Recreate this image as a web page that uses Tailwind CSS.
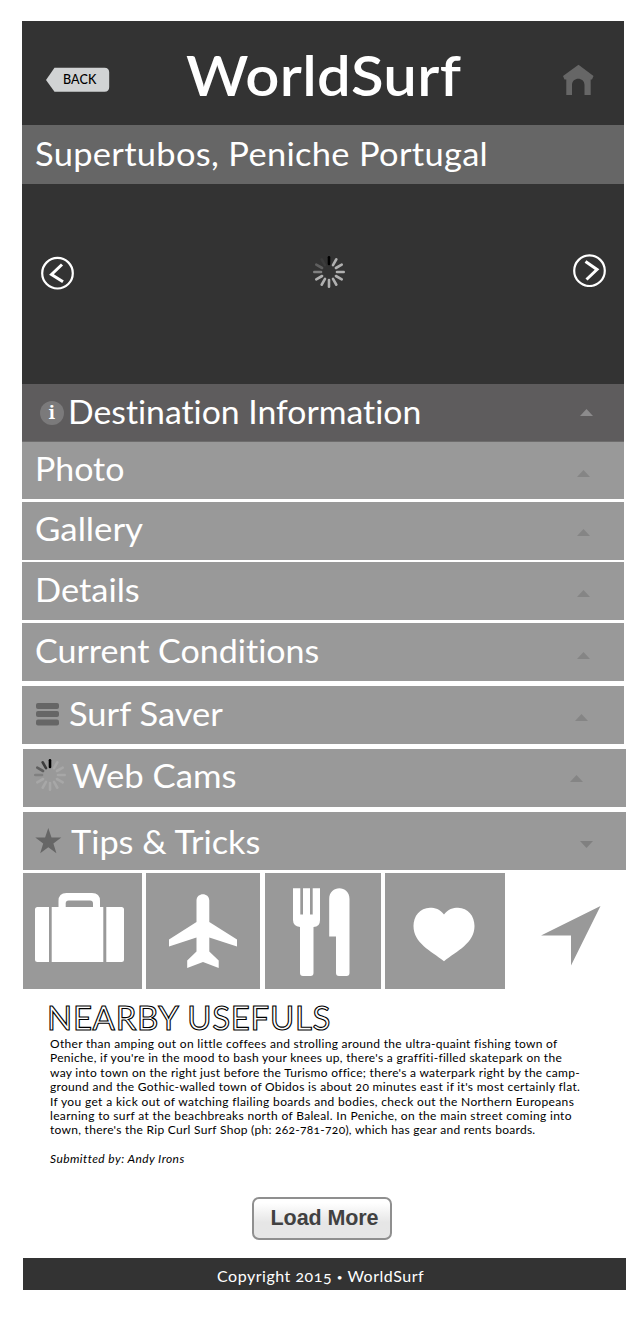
<!DOCTYPE html>
<html lang="en">
<head>
<meta charset="utf-8">
<title>WorldSurf</title>
<script src="https://cdn.jsdelivr.net/npm/@tailwindcss/browser@4"></script>
</head>
<body class="bg-white">
<svg class="hidden">
  <symbol id="up" viewBox="0 0 13 7"><path d="M0 7 6.500 0 13 7Z" fill="currentColor"/></symbol>
  <symbol id="spinner" viewBox="-17 -17 34 34">
    <g stroke-width="2.600" stroke-linecap="round" stroke="currentColor">
      <path d="M0-8V-14.700" transform="rotate(30)"/><path d="M0-8V-14.700" transform="rotate(60)"/><path d="M0-8V-14.700" transform="rotate(90)"/><path d="M0-8V-14.700" transform="rotate(120)"/><path d="M0-8V-14.700" transform="rotate(150)"/><path d="M0-8V-14.700" transform="rotate(180)"/><path d="M0-8V-14.700" transform="rotate(210)"/><path d="M0-8V-14.700" transform="rotate(240)"/>
      <path d="M0-8V-14.700" transform="rotate(270)" stroke="#808080"/><path d="M0-8V-14.700" transform="rotate(300)" stroke="#5f5f5f"/><path d="M0-8V-14.700" transform="rotate(330)" stroke="#3c3c3c"/><path d="M0-8V-14.700" stroke="#000"/>
    </g>
  </symbol>
</svg>
<main class="w-[640px] h-[1330px] overflow-hidden pt-[21px] font-[Lato,sans-serif] text-white">
  <header class="ml-[22px] w-[602px] h-[104px] bg-[#333] flex items-start">
    <div class="relative ml-[24px] mt-[46px] w-[64px] h-[26px] shrink-0">
      <svg class="absolute inset-0" width="64" height="26" viewBox="0 0 64 26"><path d="M0 13 8.500.8H58.500Q63.200.8 63.200 5.500V20Q63.200 24.700 58.500 24.700H8.500Z" fill="#d1d3d4"/></svg>
      <span class="relative block pl-[17px] text-[12.500px] leading-[26px] font-medium tracking-[0.100px] text-black">BACK</span>
    </div>
    <h1 class="ml-[76px] w-[300px] shrink-0 origin-left scale-x-[1.060] text-[56.500px] leading-[106px] font-semibold tracking-[0.300px] whitespace-nowrap">WorldSurf</h1>
    <svg class="ml-[77px] mt-[43px] shrink-0" width="32" height="32" viewBox="0 0 32 32"><path d="M15.500.7 30.500 12 29 15.500H27.700V31H21.500V21C21.500 12.500 9 12.500 9 21V31H3.300V15.500H1.500L0 12Z" fill="#666"/></svg>
  </header>
  <h2 class="ml-[22px] w-[602px] h-[59px] bg-[#666] pl-[13px] text-[32px] leading-[58px] whitespace-nowrap"><span class="inline-block origin-left scale-x-[1.076] tracking-[0.300px]">Supertubos, Peniche Portugal</span></h2>
  <section class="ml-[22px] w-[602px] h-[200px] bg-[#333] flex items-start">
    <svg class="ml-[19px] mt-[72px]" width="34" height="34" viewBox="0 0 34 34" fill="none" stroke="#fff"><circle cx="16.500" cy="17.200" r="15.300" stroke-width="2.200"/><path d="M21 8.500 10.500 18.500 22 25.800" stroke-width="3"/></svg>
    <svg class="ml-[236.500px] mt-[71px] text-[#b0b0b0]" width="34" height="34"><use href="#spinner"/></svg>
    <svg class="ml-[226.500px] mt-[69px]" width="34" height="34" viewBox="0 0 34 34" fill="none" stroke="#fff"><circle cx="17.500" cy="17.700" r="15.300" stroke-width="2.200"/><path d="M13.500 8.500 25 16.500 14.500 26.500" stroke-width="3"/></svg>
  </section>

  <nav class="text-[32px] leading-[54px] whitespace-nowrap [font-variant-ligatures:none]">
    <div class="ml-[22px] w-[602px] h-[58px] bg-[#5e5c5d] flex items-start border-b border-[#6e6d6d]">
      <span class="ml-[18px] mt-[17px] size-[24px] rounded-full bg-[#7b7a7b] text-center font-['Noto_Serif','DejaVu_Serif',serif] text-[18px] leading-[23px] font-bold">i</span>
      <span class="ml-[4px] pt-px origin-left scale-x-[1.055]">Destination Information</span>
      <svg class="ml-auto mr-[31px] mt-[25px] text-[#8c8b8c]" width="13" height="7"><use href="#up"/></svg>
    </div>
    <div class="ml-[22px] w-[602px] h-[57px] bg-[#999] flex items-start pl-[13px]">
      <span class="origin-left scale-x-[1.060]">Photo</span>
      <svg class="ml-auto mr-[34px] mt-[28px] text-[#858585]" width="13" height="7"><use href="#up"/></svg>
    </div>
    <div class="mt-[3px] ml-[22px] w-[602px] h-[58px] bg-[#999] flex items-start pl-[13px]">
      <span class="origin-left scale-x-[1.088]">Gallery</span>
      <svg class="ml-auto mr-[34px] mt-[27px] text-[#858585]" width="13" height="7"><use href="#up"/></svg>
    </div>
    <div class="mt-[2px] ml-[22px] w-[602px] h-[58px] bg-[#999] flex items-start pl-[13px] pt-px">
      <span class="origin-left scale-x-[1.075]">Details</span>
      <svg class="ml-auto mr-[34px] mt-[27px] text-[#858585]" width="13" height="7"><use href="#up"/></svg>
    </div>
    <div class="mt-[3px] ml-[22px] w-[602px] h-[58px] bg-[#999] flex items-start pl-[13px] pt-px">
      <span class="origin-left scale-x-[1.063]">Current Conditions</span>
      <svg class="ml-auto mr-[34px] mt-[28px] text-[#858585]" width="13" height="7"><use href="#up"/></svg>
    </div>
    <div class="mt-[5px] ml-[22px] w-[602px] h-[58px] bg-[#999] flex items-start">
      <svg class="ml-[14px] mt-[17px]" width="23" height="23" fill="#666"><rect width="23" height="6" rx="2"/><rect y="8" width="23" height="6" rx="2"/><rect y="16.500" width="23" height="6" rx="2"/></svg>
      <span class="ml-[10px] origin-left pt-px scale-x-[1.078]">Surf Saver</span>
      <svg class="ml-auto mr-[36px] mt-[28px] text-[#858585]" width="13" height="7"><use href="#up"/></svg>
    </div>
    <div class="mt-[5px] ml-[23px] w-[603px] h-[58px] bg-[#999] flex items-start">
      <svg class="ml-[9.500px] mt-[9px] text-[#a7a7a7]" width="34" height="34"><use href="#spinner"/></svg>
      <span class="ml-[5.500px] origin-left scale-x-[1.083]">Web Cams</span>
      <svg class="ml-auto mr-[43px] mt-[26px] text-[#858585]" width="13" height="7"><use href="#up"/></svg>
    </div>
    <div class="mt-[5px] ml-[23px] w-[603px] h-[58px] bg-[#999] flex items-start">
      <svg class="ml-[12px] mt-[16px]" width="27" height="26" viewBox="0 0 27 26"><path d="M13.300 0 16.500 9.600H26.300L18.400 15.500 21.400 25.200 13.300 19.200 5.200 25.200 8.200 15.500.3 9.600H10.100Z" fill="#666"/></svg>
      <span class="ml-[9px] origin-left pt-[3px] scale-x-[1.072]">Tips &amp; Tricks</span>
      <svg class="ml-auto mr-[33px] mt-[29px] rotate-180 text-[#808080]" width="13" height="7"><use href="#up"/></svg>
    </div>
  </nav>

  <div class="mt-[3px] ml-[23px] flex items-start">
    <svg class="bg-[#999]" width="119" height="116" viewBox="23 873 119 116"><g fill="#fff"><path d="M49 907H37.500Q35 907 35 909.500V959.500Q35 962 37.500 962H49ZM106.300 907H121.500Q124 907 124 909.500V959.500Q124 962 121.500 962H106.300ZM51.700 907H58.500V901Q58.500 893 66.500 893H92Q100 893 100 901V907H103.300V962H51.700Z"/><path d="M65.700 907V903.500Q65.700 900.500 68.700 900.500H90Q93 900.500 93 903.500V907Z" fill="#999"/></g></svg>
    <svg class="ml-[4px] bg-[#999]" width="114" height="116" viewBox="146 873 114 116"><path d="M196.500 900.500C196.500 892 209.300 892 209.300 900.500V922L237 939.500V946.500L209.300 937.500V951.500L218.700 960.500V968L203 962 187.200 968V960.500L196.500 951.500V937.500L169 946.500V939.500L196.500 922Z" fill="#fff"/></svg>
    <svg class="ml-[5px] bg-[#999]" width="116" height="116" viewBox="265 873 116 116"><path d="M293 888.300H300.300V914.500H303V888.300H310V914.500H312.700V888.300H320V920Q320 927 313.500 927V973Q313.500 976 310.500 976H303Q300 976 300 973V927Q293 926 293 920ZM329.200 936.500V899C329.200 884.500 349.500 884.500 349.500 899V973Q349.500 976 346.500 976H339Q336 976 336 973V936.500Z" fill="#fff"/></svg>
    <svg class="ml-[4px] bg-[#999]" width="120" height="116" viewBox="385 873 120 116"><path d="M444 914.500C440 909 435 907.700 430 907.700 420 907.700 413.500 916 413.500 926 413.500 943 431 951 444 961.200 457 951 474.500 943 474.500 926 474.500 916 468 907.700 458 907.700 453 907.700 448 909 444 914.500Z" fill="#fff"/></svg>
    <svg class="ml-[36px] mt-[32px]" width="60" height="62" viewBox="541 905 60 62"><path d="M600.500 906 571 965.500V935.500H541Z" fill="#999"/></svg>
  </div>

  <article class="pl-[50px] text-black">
    <h3 class="-ml-[3px] h-[48px] pt-[8px] text-[33px] leading-[40px] tracking-[0.680px] whitespace-nowrap text-white [-webkit-text-stroke:1.100px_#000]">NEARBY USEFULS</h3>
    <p class="text-[12px] leading-[14.400px] whitespace-nowrap [font-variant-numeric:oldstyle-nums]">
      <span class="block tracking-[0.304px]">Other than amping out on little coffees and strolling around the ultra-quaint fishing town of</span>
      <span class="block tracking-[0.300px]">Peniche, if you're in the mood to bash your knees up, there's a graffiti-filled skatepark on the</span>
      <span class="block tracking-[0.285px]">way into town on the right just before the Turismo office; there's a waterpark right by the camp-</span>
      <span class="block tracking-[0.310px]">ground and the Gothic-walled town of Obidos is about 20 minutes east if it's most certainly flat.</span>
      <span class="block tracking-[0.350px]">If you get a kick out of watching flailing boards and bodies, check out the Northern Europeans</span>
      <span class="block tracking-[0.340px]">learning to surf at the beachbreaks north of Baleal. In Peniche, on the main street coming into</span>
      <span class="block tracking-[0.280px]">town, there's the Rip Curl Surf Shop (ph: 262-781-720), which has gear and rents boards.</span>
    </p>
    <p class="mt-[14.500px] text-[12px] leading-[14.400px] italic tracking-[0.420px]">Submitted by: Andy Irons</p>
  </article>

  <button class="mt-[30.500px] ml-[252px] block w-[140px] h-[43px] rounded-[7px] border-2 border-[#8f8f8f] bg-linear-to-b from-white from-10% to-[#e6e6e6] to-60% pl-[5px] pb-[2px] font-['Liberation_Sans',sans-serif] text-[21.500px] font-bold text-[#414141] tracking-[-0.090px] whitespace-nowrap">Load More</button>
  <footer class="mt-[18px] ml-[23px] w-[603px] h-[32px] bg-[#333] pl-[194px] text-[16px] leading-[35px] tracking-[0.520px] whitespace-nowrap [font-variant-numeric:oldstyle-nums]">Copyright 2015 <span class="text-[10px] align-[1.500px]">•</span> WorldSurf</footer>
</main>
</body>
</html>
